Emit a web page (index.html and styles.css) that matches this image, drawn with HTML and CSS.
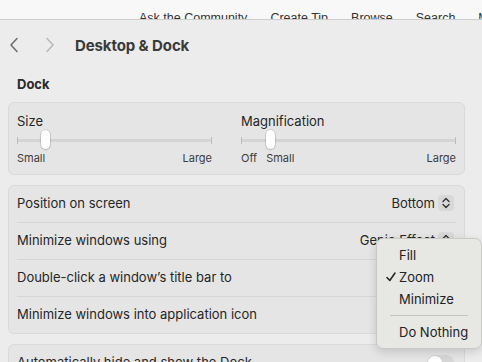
FILE: index.html
```html
<!DOCTYPE html>
<html lang="en">
<head>
  <meta charset="UTF-8" />
  <title>Desktop &amp; Dock</title>
  <link rel="stylesheet" href="styles.css">
</head>
<body>

<nav class="site-nav">
  <a>Ask the Community</a>
  <a>Create Tip</a>
  <a>Browse</a>
  <a>Search</a>
  <a>My Tips</a>
</nav>

<div class="window">
  <div class="titlebar">
    <svg class="nav-arrow" width="10" height="16" viewBox="0 0 10 16"><path d="M8 1.5 L2 8 L8 14.5" /></svg>
    <svg class="nav-arrow disabled" width="10" height="16" viewBox="0 0 10 16"><path d="M2 1.5 L8 8 L2 14.5" /></svg>
    <h1>Desktop &amp; Dock</h1>
  </div>

  <div class="content">
    <h2 class="section-title">Dock</h2>

    <div class="group sliders">
      <div class="slider-col">
        <div class="slider-label">Size</div>
        <div class="slider">
          <span class="tick"></span>
          <span class="track"></span>
          <span class="tick"></span>
          <span class="thumb" style="left: 24px"></span>
        </div>
        <div class="scale">
          <span>Small</span>
          <span class="grow"></span>
          <span>Large</span>
        </div>
      </div>
      <div class="slider-col">
        <div class="slider-label">Magnification</div>
        <div class="slider">
          <span class="tick"></span>
          <span class="track"></span>
          <span class="tick"></span>
          <span class="thumb" style="left: 25px"></span>
        </div>
        <div class="scale">
          <span>Off</span>
          <span class="scale-mid">Small</span>
          <span class="grow"></span>
          <span>Large</span>
        </div>
      </div>
    </div>

    <div class="group list">
      <div class="row">
        <span class="row-label">Position on screen</span>
        <span class="popup">Bottom
          <svg class="stepper" width="16" height="16" viewBox="0 0 16 16"><path d="M5 6.5 L8 3.5 L11 6.5 M5 9.5 L8 12.5 L11 9.5" /></svg>
        </span>
      </div>
      <div class="row">
        <span class="row-label">Minimize windows using</span>
        <span class="popup">Genie Effect
          <svg class="stepper" width="16" height="16" viewBox="0 0 16 16"><path d="M5 6.5 L8 3.5 L11 6.5 M5 9.5 L8 12.5 L11 9.5" /></svg>
        </span>
      </div>
      <div class="row">
        <span class="row-label">Double-click a window’s title bar to</span>
      </div>
      <div class="row">
        <span class="row-label">Minimize windows into application icon</span>
      </div>
    </div>

    <div class="group list">
      <div class="row">
        <span class="row-label">Automatically hide and show the Dock</span>
        <span class="toggle"><span class="knob"></span></span>
      </div>
    </div>
  </div>
</div>

<div class="menu">
  <div class="menu-item">Fill</div>
  <div class="menu-item checked">
    <svg class="check" width="10" height="10" viewBox="0 0 10 10"><path d="M1 5.5 L3.8 8.5 L9 1" /></svg>
    Zoom
  </div>
  <div class="menu-item">Minimize</div>
  <div class="menu-sep"></div>
  <div class="menu-item">Do Nothing</div>
</div>

</body>
</html>
```

FILE: styles.css
```css
body {
  margin: 0;
  width: 482px;
  height: 362px;
  overflow: hidden;
  position: relative;
  background: #f8f8f8;
  font-family: Inter, "Noto Sans", sans-serif;
  color: #262626;
}

/* website strip behind the window */
.site-nav {
  height: 19px;
  overflow: hidden;
  display: flex;
  gap: 23px;
  padding-left: 139px;
  white-space: nowrap;
  font-family: "Liberation Sans", Arial, sans-serif;
  font-size: 12.5px;
  line-height: 16px;
  color: #333;
}

.site-nav a {
  padding-top: 10px;
}

/* settings window */
.window {
  height: 342px;
  border-top: 1px solid #cdcdcd;
  background: #ececec;
}

.titlebar {
  height: 50px;
  display: flex;
  align-items: center;
  padding-left: 9px;
}

.nav-arrow {
  fill: none;
  stroke: #6b6b6b;
  stroke-width: 1.5;
  stroke-linecap: round;
  stroke-linejoin: round;
  margin-right: 26px;
}

.nav-arrow.disabled {
  stroke: #b8b8b8;
  margin-right: 20px;
}

.titlebar h1 {
  margin: 0;
  font-size: 15px;
  font-weight: 700;
  color: #3a3a3a;
  letter-spacing: -0.1px;
}

.content {
  padding-left: 8px;
  width: 457px;
}

.section-title {
  margin: 0;
  padding: 6px 9px 10px;
  font-size: 13px;
  line-height: 16px;
  font-weight: 700;
  color: #2a2a2a;
}

.group {
  background: #e5e5e5;
  border: 1px solid #dadada;
  border-radius: 6px;
  margin-bottom: 10px;
}

/* sliders */
.sliders {
  display: grid;
  grid-template-columns: 195px 215px;
  column-gap: 29px;
  padding: 10px 8px 9px;
}

.slider-label {
  font-size: 13px;
  line-height: 16px;
}

.slider {
  position: relative;
  height: 20px;
  margin-top: 1px;
  display: flex;
  align-items: center;
}

.track {
  flex: 1;
  height: 3px;
  background: #d4d4d4;
}

.tick {
  width: 1px;
  height: 7px;
  background: #bcbcbc;
}

.thumb {
  position: absolute;
  top: 0;
  width: 9px;
  height: 19px;
  border-radius: 5px;
  background: #fff;
  box-shadow: 0 0 0 0.5px rgba(0,0,0,0.18), 0 1px 2px rgba(0,0,0,0.15);
}

.scale {
  display: flex;
  margin-top: 2px;
  font-size: 11px;
  line-height: 13px;
  color: #3c3c3c;
}

.scale .grow {
  flex: 1;
}

.scale-mid {
  margin-left: 9px;
}

/* list rows */
.list {
  padding: 0 8px;
}

.row {
  height: 36px;
  display: flex;
  align-items: center;
  font-size: 13px;
  line-height: 16px;
  border-top: 1px solid #d6d6d6;
  padding-right: 2px;
}

.row:first-child {
  border-top: none;
}

.row-label {
  flex: 1;
  white-space: nowrap;
  margin-top: -2px;
}

.popup {
  display: flex;
  align-items: center;
  gap: 3px;
  margin-top: -2px;
}

.stepper {
  background: #d8d8d8;
  border-radius: 4px;
  fill: none;
  stroke: #333;
  stroke-width: 1.4;
  stroke-linecap: round;
  stroke-linejoin: round;
}

.toggle {
  width: 27px;
  height: 16px;
  border-radius: 8px;
  background: #d6d6d6;
  position: relative;
}

.knob {
  position: absolute;
  left: 1px;
  top: 1px;
  width: 14px;
  height: 14px;
  border-radius: 50%;
  background: #fff;
  box-shadow: 0 1px 1px rgba(0,0,0,0.2);
}

/* pop-up menu over the rows */
.menu {
  position: absolute;
  left: 376px;
  top: 238px;
  width: 104px;
  padding: 5px 0;
  background: #e7e7e4;
  border: 1px solid #c9c9c6;
  border-radius: 7px;
  box-shadow: 0 3px 10px rgba(0,0,0,0.15);
  font-size: 13px;
  color: #222;
}

.menu-item {
  height: 22px;
  line-height: 22px;
  padding-left: 22px;
  position: relative;
}

.check {
  position: absolute;
  left: 9px;
  top: 6px;
  fill: none;
  stroke: #222;
  stroke-width: 1.5;
  stroke-linecap: round;
  stroke-linejoin: round;
}

.menu-sep {
  height: 1px;
  margin: 5px 13px 5px 13px;
  background: #c4c4c2;
}
```
